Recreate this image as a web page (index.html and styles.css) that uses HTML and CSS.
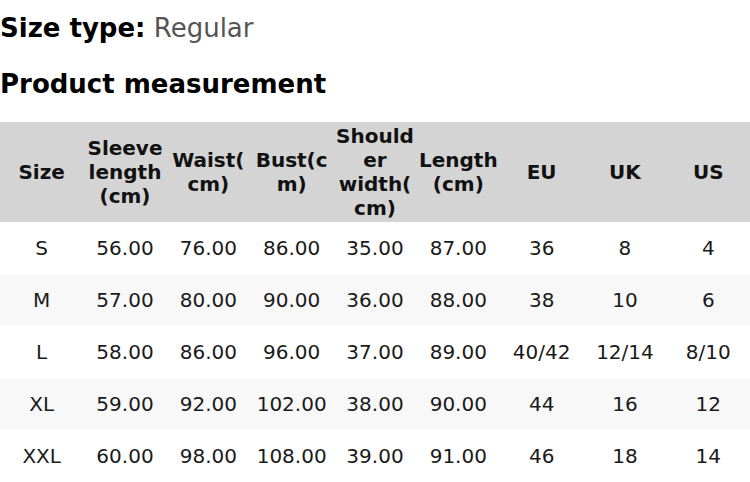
FILE: index.html
```html
<!DOCTYPE html>
<html>
<head>
<meta charset="utf-8">
<link rel="stylesheet" href="styles.css">
</head>
<body>
<div class="page">
  <p class="size-type"><span class="label">Size type:</span> <span class="value">Regular</span></p>
  <h2 class="title">Product measurement</h2>
  <table class="chart">
    <thead>
      <tr>
        <th>Size</th>
        <th>Sleeve length (cm)</th>
        <th>Waist(cm)</th>
        <th>Bust(cm)</th>
        <th>Shoulder width(cm)</th>
        <th>Length (cm)</th>
        <th>EU</th>
        <th>UK</th>
        <th>US</th>
      </tr>
    </thead>
    <tbody>
      <tr><td>S</td><td>56.00</td><td>76.00</td><td>86.00</td><td>35.00</td><td>87.00</td><td>36</td><td>8</td><td>4</td></tr>
      <tr><td>M</td><td>57.00</td><td>80.00</td><td>90.00</td><td>36.00</td><td>88.00</td><td>38</td><td>10</td><td>6</td></tr>
      <tr><td>L</td><td>58.00</td><td>86.00</td><td>96.00</td><td>37.00</td><td>89.00</td><td>40/42</td><td>12/14</td><td>8/10</td></tr>
      <tr><td>XL</td><td>59.00</td><td>92.00</td><td>102.00</td><td>38.00</td><td>90.00</td><td>44</td><td>16</td><td>12</td></tr>
      <tr><td>XXL</td><td>60.00</td><td>98.00</td><td>108.00</td><td>39.00</td><td>91.00</td><td>46</td><td>18</td><td>14</td></tr>
    </tbody>
  </table>
</div>
</body>
</html>
```

FILE: styles.css
```css
html, body {
  margin: 0;
  padding: 0;
  background: #ffffff;
}

body {
  font-family: "DejaVu Sans", sans-serif;
  color: #111111;
}

.page {
  width: 750px;
}

.size-type {
  margin: 12px 0 0;
  font-size: 26px;
  line-height: 32px;
}

.size-type .label {
  font-weight: bold;
  color: #000000;
}

.size-type .value {
  color: #555555;
}

.title {
  margin: 24px 0 0;
  font-size: 26px;
  line-height: 32px;
  font-weight: bold;
  color: #000000;
}

.chart {
  margin-top: 22px;
  width: 750px;
  border-collapse: collapse;
  table-layout: fixed;
  font-size: 20px;
  line-height: 24px;
}

.chart th {
  background: #d4d4d4;
  font-weight: bold;
  color: #111111;
  padding: 2px 1px;
  text-align: center;
  vertical-align: middle;
  overflow-wrap: anywhere;
}

.chart td {
  padding: 14px 1px;
  text-align: center;
  color: #1a1a1a;
}

.chart tbody tr:nth-child(even) td {
  background: #f8f8f8;
}
```
